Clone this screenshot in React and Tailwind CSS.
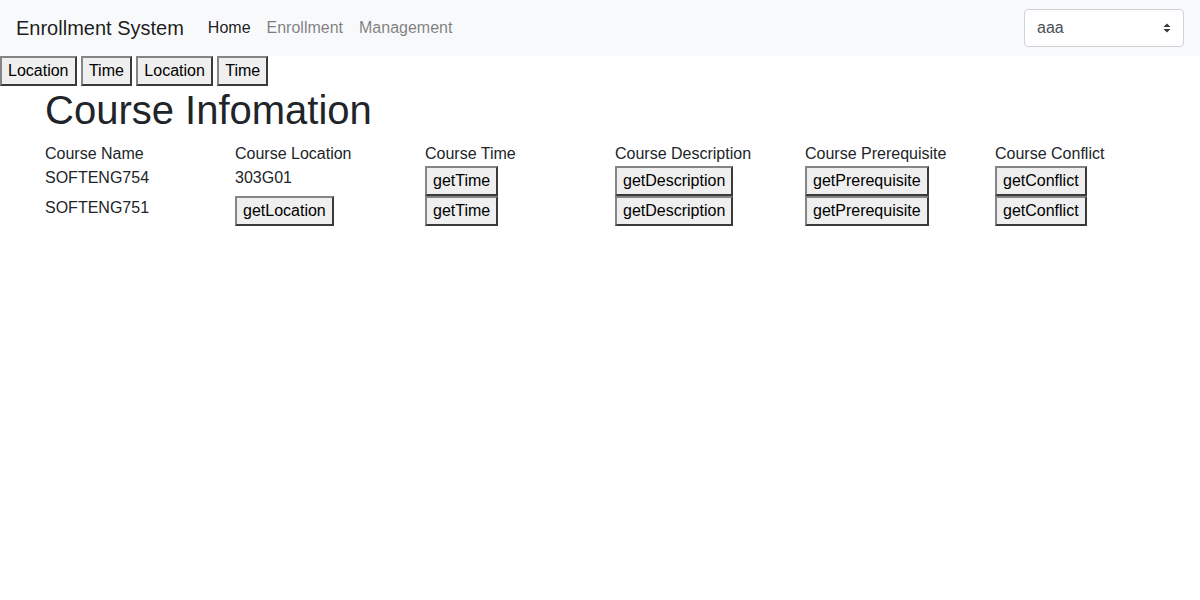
import React from 'react';

const btn = "bg-[#efefef] border-2 border-solid border-t-[#858585] border-l-[#858585] border-r-[#3a3a3a] border-b-[#3a3a3a] px-[6px] py-[1px] leading-6 text-base text-black";

const courses = [
    { name: 'SOFTENG754', location: '303G01' },
    { name: 'SOFTENG751', location: null },
];

const headers = ['Course Name', 'Course Location', 'Course Time', 'Course Description', 'Course Prerequisite', 'Course Conflict'];

const App = () => {
    return (
        <div className="min-h-[600px] bg-white text-[#212529]" style={{ fontFamily: '"Liberation Sans", Arial, sans-serif' }}>
            {/* Navbar */}
            <nav className="h-14 bg-[#f8f9fa] flex items-center px-4">
                <span className="text-xl text-black/90 mr-4">Enrollment System</span>
                <div className="flex text-base">
                    <span className="px-2 text-black/90">Home</span>
                    <span className="px-2 text-black/50">Enrollment</span>
                    <span className="px-2 text-black/50">Management</span>
                </div>
                <div className="ml-auto w-40 h-[38px] bg-white border border-[#ced4da] rounded flex items-center justify-between pl-3 pr-3">
                    <span className="text-base text-[#495057]">aaa</span>
                    <svg width="8" height="12" viewBox="0 0 8 12">
                        <path d="M4 1.5 L7.5 5 H0.5 Z" fill="#343a40" />
                        <path d="M4 10.5 L7.5 7 H0.5 Z" fill="#343a40" />
                    </svg>
                </div>
            </nav>

            {/* Toolbar buttons */}
            <div className="flex gap-[4.45px]">
                <button className={btn}>Location</button>
                <button className={btn}>Time</button>
                <button className={btn}>Location</button>
                <button className={btn}>Time</button>
            </div>

            {/* Content */}
            <div className="max-w-[1140px] mx-auto px-[15px]">
                <h1 className="text-[40px] leading-[1.2] mb-2 font-normal">Course Infomation</h1>
                <div className="grid grid-cols-[repeat(6,190px)]">
                    {headers.map(h => (
                        <div key={h} className="leading-6">{h}</div>
                    ))}
                    {courses.map(c => (
                        <React.Fragment key={c.name}>
                            <div className="leading-6">{c.name}</div>
                            <div>
                                {c.location ? <span className="leading-6">{c.location}</span> : <button className={btn}>getLocation</button>}
                            </div>
                            <div><button className={btn}>getTime</button></div>
                            <div><button className={btn}>getDescription</button></div>
                            <div><button className={btn}>getPrerequisite</button></div>
                            <div><button className={btn}>getConflict</button></div>
                        </React.Fragment>
                    ))}
                </div>
            </div>
        </div>
    );
};

export default App;
